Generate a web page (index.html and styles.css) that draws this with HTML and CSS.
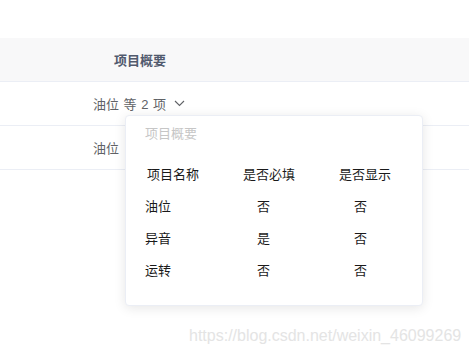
FILE: index.html
```html
<!DOCTYPE html>
<html lang="zh-CN">
<head>
    <meta charset="UTF-8">
    <title>项目概要</title>
    <link rel="stylesheet" href="styles.css">
</head>
<body>
    <div class="page">
        <div class="grid">
            <div class="grid-head">
                <span class="head-cell">项目概要</span>
            </div>
            <div class="grid-row">
                <span class="cell">油位 等 2 项
                    <svg class="chevron" width="11" height="7" viewBox="0 0 11 7">
                        <path d="M1 1 L5.5 5.5 L10 1" fill="none" stroke="#606266" stroke-width="1.1"/>
                    </svg>
                </span>
            </div>
            <div class="grid-row">
                <span class="cell">油位</span>
            </div>
        </div>

        <div class="popover">
            <div class="pop-title">项目概要</div>
            <table class="pop-table">
                <tr>
                    <th class="col1">项目名称</th>
                    <th class="col2">是否必填</th>
                    <th class="col3">是否显示</th>
                </tr>
                <tr>
                    <td>油位</td>
                    <td class="val">否</td>
                    <td class="val">否</td>
                </tr>
                <tr>
                    <td>异音</td>
                    <td class="val">是</td>
                    <td class="val">否</td>
                </tr>
                <tr>
                    <td>运转</td>
                    <td class="val">否</td>
                    <td class="val">否</td>
                </tr>
            </table>
        </div>

        <div class="watermark">https://blog.csdn.net/weixin_46099269</div>
    </div>
</body>
</html>
```

FILE: styles.css
```css
*{
    margin: 0;
    padding: 0;
    box-sizing: border-box;
}
body{
    background: #fff;
    font-family: "Liberation Sans", "Noto Sans CJK SC", sans-serif;
    font-size: 13px;
    color: #606266;
}
.page{
    position: relative;
    width: 469px;
    height: 356px;
    overflow: hidden;
    padding-top: 38px;
}
.grid-head{
    height: 44px;
    background-color: #f8f8f9;
    border-bottom: 1px solid #ebeef5;
    display: flex;
    align-items: center;
    padding-left: 114px;
}
.head-cell{
    font-weight: bold;
    color: #515a6e;
}
.grid-row{
    height: 44px;
    border-bottom: 1px solid #ebeef5;
    display: flex;
    align-items: center;
    padding-left: 93px;
}
.cell{
    display: flex;
    align-items: center;
    word-spacing: 1px;
}
.chevron{
    margin-left: 8px;
}

.popover{
    position: absolute;
    left: 125px;
    top: 115px;
    width: 298px;
    height: 191px;
    background: #fff;
    border: 1px solid #ebeef5;
    border-radius: 4px;
    box-shadow: 0 2px 12px rgba(0, 0, 0, 0.1);
    padding: 8px 19px 0;
}
.pop-title{
    line-height: 20px;
    color: #c6c6c6;
    margin-bottom: 13px;
}
.pop-table{
    border-collapse: collapse;
    color: #1a1a1a;
}
.pop-table th, .pop-table td{
    height: 32px;
    padding: 0;
    font-weight: normal;
    text-align: left;
}
.pop-table .col1{
    width: 97px;
    padding-left: 2px;
}
.pop-table .col2{
    width: 97px;
    padding-left: 1px;
}
.pop-table .col3{
    width: 64px;
}
.pop-table .val{
    padding-left: 15px;
}

.watermark{
    position: absolute;
    left: 189px;
    top: 327px;
    font-family: "Liberation Sans", sans-serif;
    font-size: 16px;
    color: #e4e4e4;
    white-space: nowrap;
}
```
